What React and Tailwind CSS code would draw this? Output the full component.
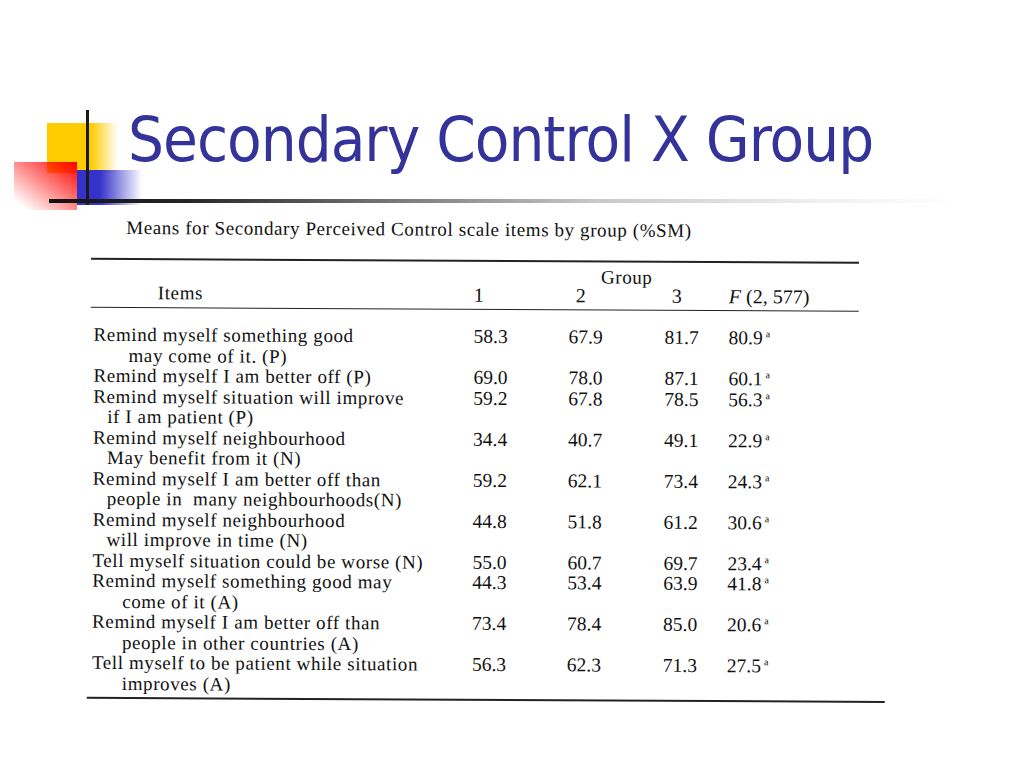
import React from "react";

const rows = [
  { lines: ["Remind myself something good", "may come of it. (P)"], indent: "pl-[35px]", v: ["58.3", "67.9", "81.7", "80.9"] },
  { lines: ["Remind myself I am better off (P)"], v: ["69.0", "78.0", "87.1", "60.1"] },
  { lines: ["Remind myself situation will improve", "if I am patient (P)"], indent: "pl-[14px]", v: ["59.2", "67.8", "78.5", "56.3"] },
  { lines: ["Remind myself neighbourhood", "May benefit from it (N)"], indent: "pl-[14px]", v: ["34.4", "40.7", "49.1", "22.9"] },
  { lines: ["Remind myself I am better off than", "people in  many neighbourhoods(N)"], indent: "pl-[14px]", v: ["59.2", "62.1", "73.4", "24.3"] },
  { lines: ["Remind myself neighbourhood", "will improve in time (N)"], indent: "pl-[14px]", v: ["44.8", "51.8", "61.2", "30.6"] },
  { lines: ["Tell myself situation could be worse (N)"], v: ["55.0", "60.7", "69.7", "23.4"] },
  { lines: ["Remind myself something good may", "come of it (A)"], indent: "pl-[30px]", v: ["44.3", "53.4", "63.9", "41.8"] },
  { lines: ["Remind myself I am better off than", "people in other countries (A)"], indent: "pl-[30px]", v: ["73.4", "78.4", "85.0", "20.6"] },
  { lines: ["Tell myself to be patient while situation", "improves (A)"], indent: "pl-[30px]", v: ["56.3", "62.3", "71.3", "27.5"] },
];

function Decoration() {
  return (
    <svg className="absolute left-0 top-0" width="1024" height="215" viewBox="0 0 1024 215">
      <defs>
        <linearGradient id="yel" x1="0" y1="0" x2="1" y2="0">
          <stop offset="0" stopColor="#FFCC00" stopOpacity="1" />
          <stop offset="0.62" stopColor="#FFCC00" stopOpacity="1" />
          <stop offset="1" stopColor="#FFCC00" stopOpacity="0" />
        </linearGradient>
        <linearGradient id="blu" x1="0" y1="0" x2="1" y2="0">
          <stop offset="0" stopColor="#3333CC" stopOpacity="1" />
          <stop offset="0.35" stopColor="#3333CC" stopOpacity="1" />
          <stop offset="1" stopColor="#3333CC" stopOpacity="0" />
        </linearGradient>
        <linearGradient id="red" x1="1" y1="0" x2="0" y2="1">
          <stop offset="0" stopColor="#FF0000" stopOpacity="1" />
          <stop offset="0.9" stopColor="#FF0000" stopOpacity="0" />
        </linearGradient>
        <linearGradient id="hl" x1="0" y1="0" x2="1" y2="0">
          <stop offset="0" stopColor="#111" />
          <stop offset="0.15" stopColor="#262626" />
          <stop offset="0.6" stopColor="#c8c8c8" />
          <stop offset="0.85" stopColor="#f0f0f0" />
          <stop offset="1" stopColor="#fff" />
        </linearGradient>
      </defs>
      <rect x="47" y="123" width="71" height="50" fill="url(#yel)" />
      <rect x="77" y="170" width="65" height="35" fill="url(#blu)" />
      <rect x="14" y="162" width="63" height="48" fill="url(#red)" />
      <rect x="49" y="199" width="911" height="4" fill="url(#hl)" />
      <rect x="86" y="110" width="3" height="95" fill="#1a1a1a" />
    </svg>
  );
}

function Sup() {
  return <span className="relative -top-[7px] text-[10px] leading-[0] ml-[3px]">a</span>;
}

export default function App() {
  return (
    <div className="w-[1024px] h-[768px] bg-white relative overflow-hidden">
      <header className="relative h-[212px]">
        <Decoration />
        <h1
          className="relative pt-[108px] pl-[128px] text-[63px] leading-[64px] tracking-[-1px] text-[#333399] font-stretch-condensed whitespace-nowrap"
          style={{ fontFamily: "'DejaVu Sans Condensed', 'DejaVu Sans', sans-serif" }}
        >
          Secondary Control X Group
        </h1>
      </header>

      <section
        className="rotate-[0.3deg] text-[19px] text-[#111]"
        style={{ fontFamily: "'Liberation Serif', serif" }}
      >
        <p className="pl-[125px] leading-[24px] pt-[6px] tracking-[0.6px]">
          Means for Secondary Perceived Control scale items by group (%SM)
        </p>
        <div className="ml-[90px] w-[768px] h-[1.5px] bg-[#222] mt-[18px]" />
        <div className="ml-[90px] w-[768px] grid grid-cols-[383px_95px_96px_64px_130px] leading-[17px]">
          <div className="pl-[67px] pt-[24px] tracking-[0.6px]">Items</div>
          <div className="col-span-4 flex flex-col">
            <div className="pl-[127px] pt-[6px] tracking-[0.6px]">Group</div>
            <div className="grid grid-cols-[95px_96px_64px_130px] pt-[2px] text-[20px]">
              <span className="pl-[0px]">1</span>
              <span className="pl-[7px]">2</span>
              <span className="pl-[7px]">3</span>
              <span>
                <i>F</i> (2, 577)
              </span>
            </div>
          </div>
        </div>
        <div className="ml-[90px] w-[768px] h-[1.5px] bg-[#222] mt-[5px]" />
        <div className="ml-[93px] pt-[17px] leading-[20.5px]">
          {rows.map((r, i) => (
            <div key={i} className="grid grid-cols-[380px_95px_96px_64px_auto]">
              <div className="flex flex-col whitespace-pre tracking-[0.6px]">
                <span>{r.lines[0]}</span>
                {r.lines[1] && <span className={r.indent}>{r.lines[1]}</span>}
              </div>
              <span className="text-[19.5px]">{r.v[0]}</span>
              <span className="text-[19.5px]">{r.v[1]}</span>
              <span className="text-[19.5px]">{r.v[2]}</span>
              <span className="text-[19.5px]">
                {r.v[3]}
                <Sup />
              </span>
            </div>
          ))}
        </div>
        <div className="ml-[88px] w-[798px] h-[1.5px] bg-[#222] mt-[3px]" />
      </section>
    </div>
  );
}
